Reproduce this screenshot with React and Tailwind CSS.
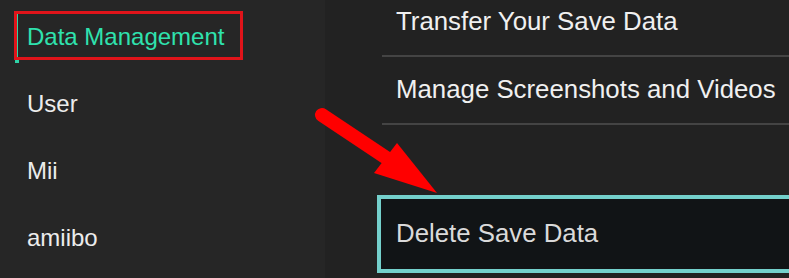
import React from 'react';

const FONT = { fontFamily: '"Liberation Sans", Arial, sans-serif' };

const SIDE_ITEMS = ['Data Management', 'User', 'Mii', 'amiibo'];

function SideMenu() {
  return (
    <div className="relative w-[325px] shrink-0 bg-[#262626] pt-[3px]">
      {SIDE_ITEMS.map((label, i) => (
        <div key={label} className="relative flex h-[67px] items-center pl-[27px]">
          {i === 0 && (
            <>
              <div className="absolute left-[16px] top-[11px] h-[46px] w-[2px] bg-[#2fd3a8]" />
              <div className="absolute left-[15px] top-[56px] h-[4px] w-[4px] bg-[#2fd3a8]" />
            </>
          )}
          <span
            className={
              'text-[24px] leading-none ' + (i === 0 ? 'text-[#2fe2ae]' : 'text-[#ececec]')
            }
          >
            {label}
          </span>
        </div>
      ))}
      {/* annotation box */}
      <div className="absolute left-[14px] top-[11px] h-[49px] w-[229px] border-[3px] border-[#e0141a]" />
    </div>
  );
}

function Row({ label }) {
  return (
    <div className="flex h-[68px] items-center border-b-2 border-[#444] pl-[14px]">
      <span className="text-[25.8px] leading-none text-[#f0f0f0]">{label}</span>
    </div>
  );
}

export default function App() {
  return (
    <div
      className="relative flex h-[278px] w-[789px] overflow-hidden bg-[#222222]"
      style={FONT}
    >
      <SideMenu />
      <div className="flex min-w-0 flex-1 flex-col pl-[57px]">
        <div className="-mt-[11px]">
          <Row label="Transfer Your Save Data" />
          <Row label="Manage Screenshots and Videos" />
        </div>
        <div className="-ml-[5px] mt-[70px] flex h-[78px] w-[420px] items-center border-4 border-[#74d0cc] bg-[#111416] pl-[15px]">
          <span className="text-[25.8px] leading-none text-[#dadada]">Delete Save Data</span>
        </div>
      </div>
      {/* annotation arrow */}
      <svg
        className="pointer-events-none absolute left-0 top-0"
        width="789"
        height="278"
        viewBox="0 0 789 278"
      >
        <line
          x1="322"
          y1="115"
          x2="388"
          y2="159"
          stroke="#ff0000"
          strokeWidth="14"
          strokeLinecap="round"
        />
        <polygon points="397,143 374,173 437,193" fill="#ff0000" />
      </svg>
    </div>
  );
}
